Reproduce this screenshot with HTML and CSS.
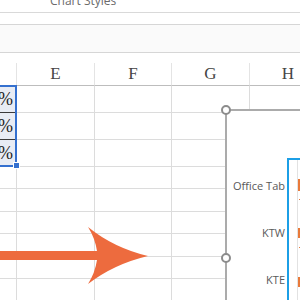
FILE: index.html
```html
<!DOCTYPE html>
<html lang="en">
<head>
  <meta charset="UTF-8">
  <title>Chart Styles</title>
  <link rel="stylesheet" href="styles.css">
</head>
<body>
  <div class="ribbon">
    <span class="group-label">Chart Styles</span>
  </div>
  <div class="formula-bar"></div>

  <div class="sheet">
    <div class="head"></div>
    <div class="head">E</div>
    <div class="head">F</div>
    <div class="head">G</div>
    <div class="head">H</div>

    <div class="cell sel">%</div><div class="cell"></div><div class="cell"></div><div class="cell"></div><div class="cell"></div>
    <div class="cell sel">%</div><div class="cell"></div><div class="cell"></div><div class="cell"></div><div class="cell"></div>
    <div class="cell sel">%</div><div class="cell"></div><div class="cell"></div><div class="cell"></div><div class="cell"></div>

    <div class="cell"></div><div class="cell"></div><div class="cell"></div><div class="cell"></div><div class="cell"></div>
    <div class="cell"></div><div class="cell"></div><div class="cell"></div><div class="cell"></div><div class="cell"></div>
    <div class="cell"></div><div class="cell"></div><div class="cell"></div><div class="cell"></div><div class="cell"></div>
    <div class="cell"></div><div class="cell"></div><div class="cell"></div><div class="cell"></div><div class="cell"></div>
    <div class="cell"></div><div class="cell"></div><div class="cell"></div><div class="cell"></div><div class="cell"></div>
    <div class="cell"></div><div class="cell"></div><div class="cell"></div><div class="cell"></div><div class="cell"></div>
  </div>

  <!-- selection outline + fill handle -->
  <div class="selection"></div>
  <div class="fill-handle"></div>

  <!-- chart object -->
  <div class="chart">
    <div class="labels">
      <div class="label">Office Tab</div>
      <div class="label">KTW</div>
      <div class="label">KTE</div>
    </div>
    <div class="plot">
      <div class="bar" style="top:19px;height:12px"></div>
      <div class="bar tick" style="top:39px"></div>
      <div class="bar" style="top:68px;height:10px"></div>
      <div class="bar tick" style="top:87px"></div>
      <div class="bar" style="top:117px;height:10px"></div>
    </div>
  </div>
  <div class="handle h-top"></div>
  <div class="handle h-mid"></div>

  <svg class="arrow" width="300" height="300" viewBox="0 0 300 300">
    <path d="M0,251 L97,251 Q95,238 88,227 Q114,248 148,256 Q114,264 88,284 Q95,273 97,260 L0,260 Z" fill="#ed6b3e"/>
  </svg>
</body>
</html>
```

FILE: styles.css
```css
body {
  margin: 0;
  width: 300px;
  height: 300px;
  overflow: hidden;
  background: #fff;
  font-family: 'Open Sans', sans-serif;
  position: relative;
}
.ribbon {
  height: 12px;
  border-bottom: 1px solid #d9d9d9;
  overflow: hidden;
}
.group-label {
  display: block;
  margin: -7px 0 0 50px;
  font-size: 12px;
  line-height: 16px;
  color: #6b6b6b;
}
.formula-bar {
  height: 27px;
  margin-top: 11px;
  background: #fafafa;
  border-top: 1px solid #d6d6d6;
  border-bottom: 1px solid #d6d6d6;
}
.sheet {
  margin-top: 10px;
  display: grid;
  grid-template-columns: 17px 78px 77px 78px 77px;
  grid-template-rows: 23px 27px 27px 27px 22px 23px 22px 23px 22px 23px;
}
.head, .cell {
  box-sizing: border-box;
  border-right: 1px solid #dcdcdc;
  border-bottom: 1px solid #dcdcdc;
}
.head {
  border-right-color: #e4e4e4;
  border-bottom-color: #bdbdbd;
  font-family: 'Liberation Serif', serif;
  font-size: 17px;
  color: #454545;
  display: flex;
  align-items: center;
  justify-content: center;
}
.sel {
  background: #e8ecf4;
  border-bottom-color: #3a3a3a;
  font-family: 'Liberation Serif', serif;
  font-size: 18px;
  color: #222;
  display: flex;
  align-items: center;
  justify-content: flex-end;
  padding-right: 3px;
}
.selection {
  position: absolute;
  left: -3px;
  top: 85px;
  width: 16px;
  height: 78px;
  border: 2px solid #3470cf;
}
.fill-handle {
  position: absolute;
  left: 13px;
  top: 162px;
  width: 5px;
  height: 5px;
  background: #3470cf;
  border: 1px solid #fff;
}
.chart {
  position: absolute;
  left: 225px;
  top: 109px;
  width: 100px;
  height: 220px;
  background: #fff;
  border-left: 2px solid #ababab;
  border-top: 2px solid #ababab;
}
.labels {
  width: 58px;
  padding-top: 51px;
  display: flex;
  flex-direction: column;
}
.label {
  height: 47px;
  display: flex;
  align-items: center;
  justify-content: flex-end;
  font-size: 11px;
  color: #595959;
}
.plot {
  position: absolute;
  left: 60px;
  top: 47px;
  width: 40px;
  height: 200px;
  border-left: 2px solid #1c9fe6;
  border-top: 2px solid #1c9fe6;
}
.plot::before {
  content: '';
  position: absolute;
  left: 8px;
  top: 0;
  bottom: 0;
  border-left: 1px solid #e2e2e2;
}
.bar {
  position: absolute;
  left: 9px;
  width: 6px;
  background: #e97a3a;
}
.tick {
  height: 1px;
  left: 10px;
}
.handle {
  position: absolute;
  left: 221px;
  width: 6px;
  height: 6px;
  border: 2px solid #8c8c8c;
  border-radius: 50%;
  background: #fff;
}
.h-top { top: 105px; }
.h-mid { top: 253px; }
.arrow {
  position: absolute;
  left: 0;
  top: 0;
}
```
